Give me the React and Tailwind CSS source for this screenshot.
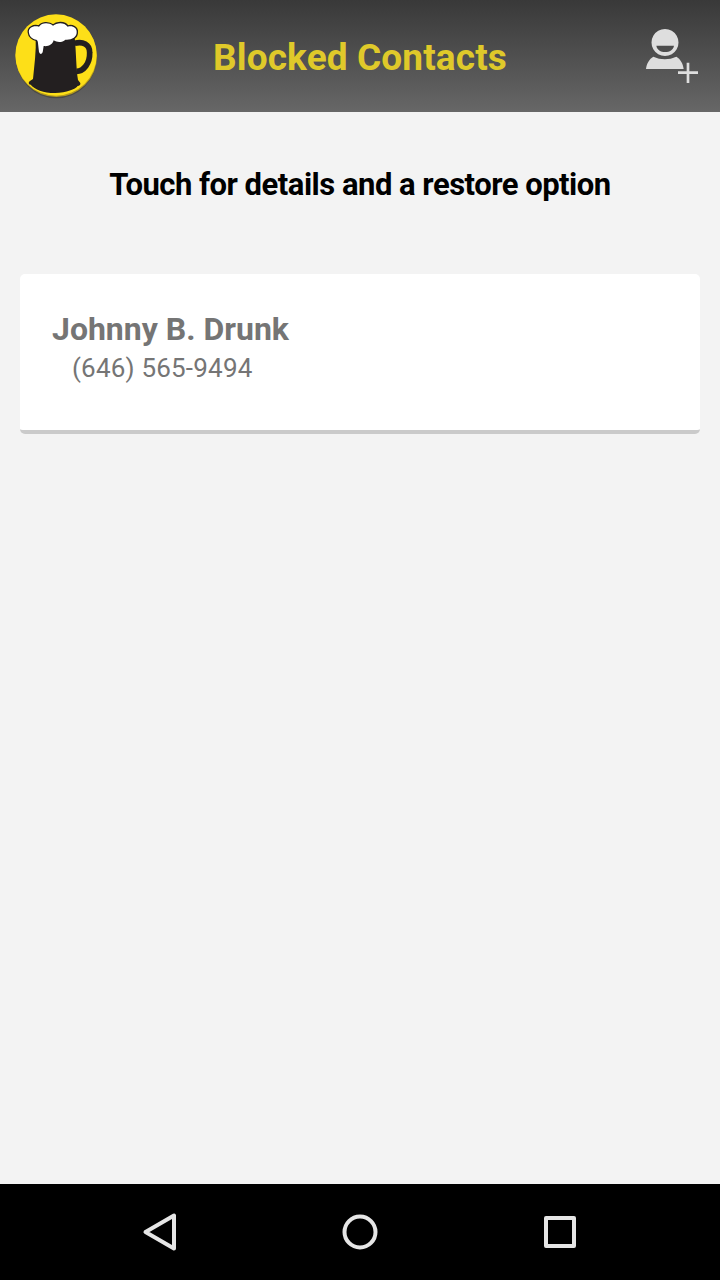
import React from 'react';

const contacts = [{ name: 'Johnny B. Drunk', phone: '(646) 565-9494' }];

const BeerLogo = () => (
  <svg className="h-28 w-28 shrink-0" viewBox="0 0 336 336" fill="none">
    <ellipse cx="169" cy="173" rx="121" ry="122" fill="#2f2f2a" opacity="0.45" />
    <circle cx="169" cy="169" r="122" fill="#b39a1e" />
    <circle cx="168" cy="165" r="122" fill="#fddf18" />
    <path
      d="M224 130 C248 124 269 132 269 158 C270 190 251 214 229 214"
      stroke="#231f20"
      strokeWidth="17"
    />
    <path
      d="M107 112 L224 112 C229 160 228 205 234 240 L241 249 C242 254 239 258 233 258 C226 268 200 278 165 279 C130 279 104 268 92 254 C84 253 85 245 91 242 L99 237 C103 195 109 155 107 112 Z"
      fill="#231f20"
    />
    <path
      d="M109 119 C112 121 114 124 114 130 L117 156 Q122 167 128 157 L131 138 C145 140 158 134 161 121 C173 129 188 127 196 119 C213 121 231 112 230 97 C232 83 216 75 203 80 C193 66 171 67 159 77 C145 66 125 68 117 80 C100 75 84 84 87 98 C88 109 98 117 109 119 Z"
      fill="#231f20"
      stroke="#231f20"
      strokeWidth="8"
      strokeLinejoin="round"
    />
    <path
      d="M109 119 C112 121 114 124 114 130 L117 156 Q122 167 128 157 L131 138 C145 140 158 134 161 121 C173 129 188 127 196 119 C213 121 231 112 230 97 C232 83 216 75 203 80 C193 66 171 67 159 77 C145 66 125 68 117 80 C100 75 84 84 87 98 C88 109 98 117 109 119 Z"
      fill="#fff"
    />
  </svg>
);

const AddContactIcon = () => (
  <svg className="h-[90px] w-[90px]" viewBox="0 0 270 270" fill="#dedede">
    <path
      fillRule="evenodd"
      d="M105 57 a40.500 40.500 0 1 0 0.010 0 Z M79 107 H132 C130 119 119 126 105.500 126 C92 126 81 119 79 107 Z"
    />
    <path d="M48 177 C50 160 58 147 70 140 C92 150 117 150 139 140 C151 147 159 160 161 177 Z" />
    <path d="M170 158 H178 V184 H204 V192 H178 V219 H170 V192 H144 V184 H170 Z" />
  </svg>
);

const Header = () => (
  <header className="flex h-28 items-center justify-between bg-linear-to-b from-[#393939] to-[#676767]">
    <BeerLogo />
    <h1 className="pt-[3px] text-[37px] leading-[44px] font-bold tracking-[0.12px] whitespace-nowrap text-[#dfc92a]">
      Blocked Contacts
    </h1>
    <button className="flex h-28 w-28 justify-end pt-[10px]" aria-label="Add contact">
      <AddContactIcon />
    </button>
  </header>
);

const ContactCard = ({ name, phone }) => (
  <li className="h-40 rounded-[5px] border-b-4 border-[#cacaca] bg-white px-8 pt-9 text-[#757575]">
    <div className="text-[32px] leading-[38px] font-bold">{name}</div>
    <div className="pl-5 text-[26px] leading-[40px] tracking-[0.2px]">{phone}</div>
  </li>
);

const NavBar = () => (
  <nav className="h-24 bg-black">
    <svg
      className="h-24 w-full"
      viewBox="0 0 720 96"
      fill="none"
      stroke="#e6e6e6"
      strokeWidth="4"
      strokeLinejoin="round"
    >
      <path d="M174 31.500 V64.500 L145.500 48 Z" />
      <circle cx="360" cy="48" r="15.500" />
      <rect x="546" y="34" width="28" height="28" />
    </svg>
  </nav>
);

export default function App() {
  return (
    <div className="flex h-screen flex-col bg-[#f3f3f3] font-['Roboto',sans-serif]">
      <Header />
      <main className="flex-1 px-5">
        <p className="pt-[55px] text-center text-[31px] leading-9 font-bold tracking-[-0.5px] text-black">
          Touch for details and a restore option
        </p>
        <ul className="mt-[71px]">
          {contacts.map((contact) => (
            <ContactCard key={contact.phone} name={contact.name} phone={contact.phone} />
          ))}
        </ul>
      </main>
      <NavBar />
    </div>
  );
}
